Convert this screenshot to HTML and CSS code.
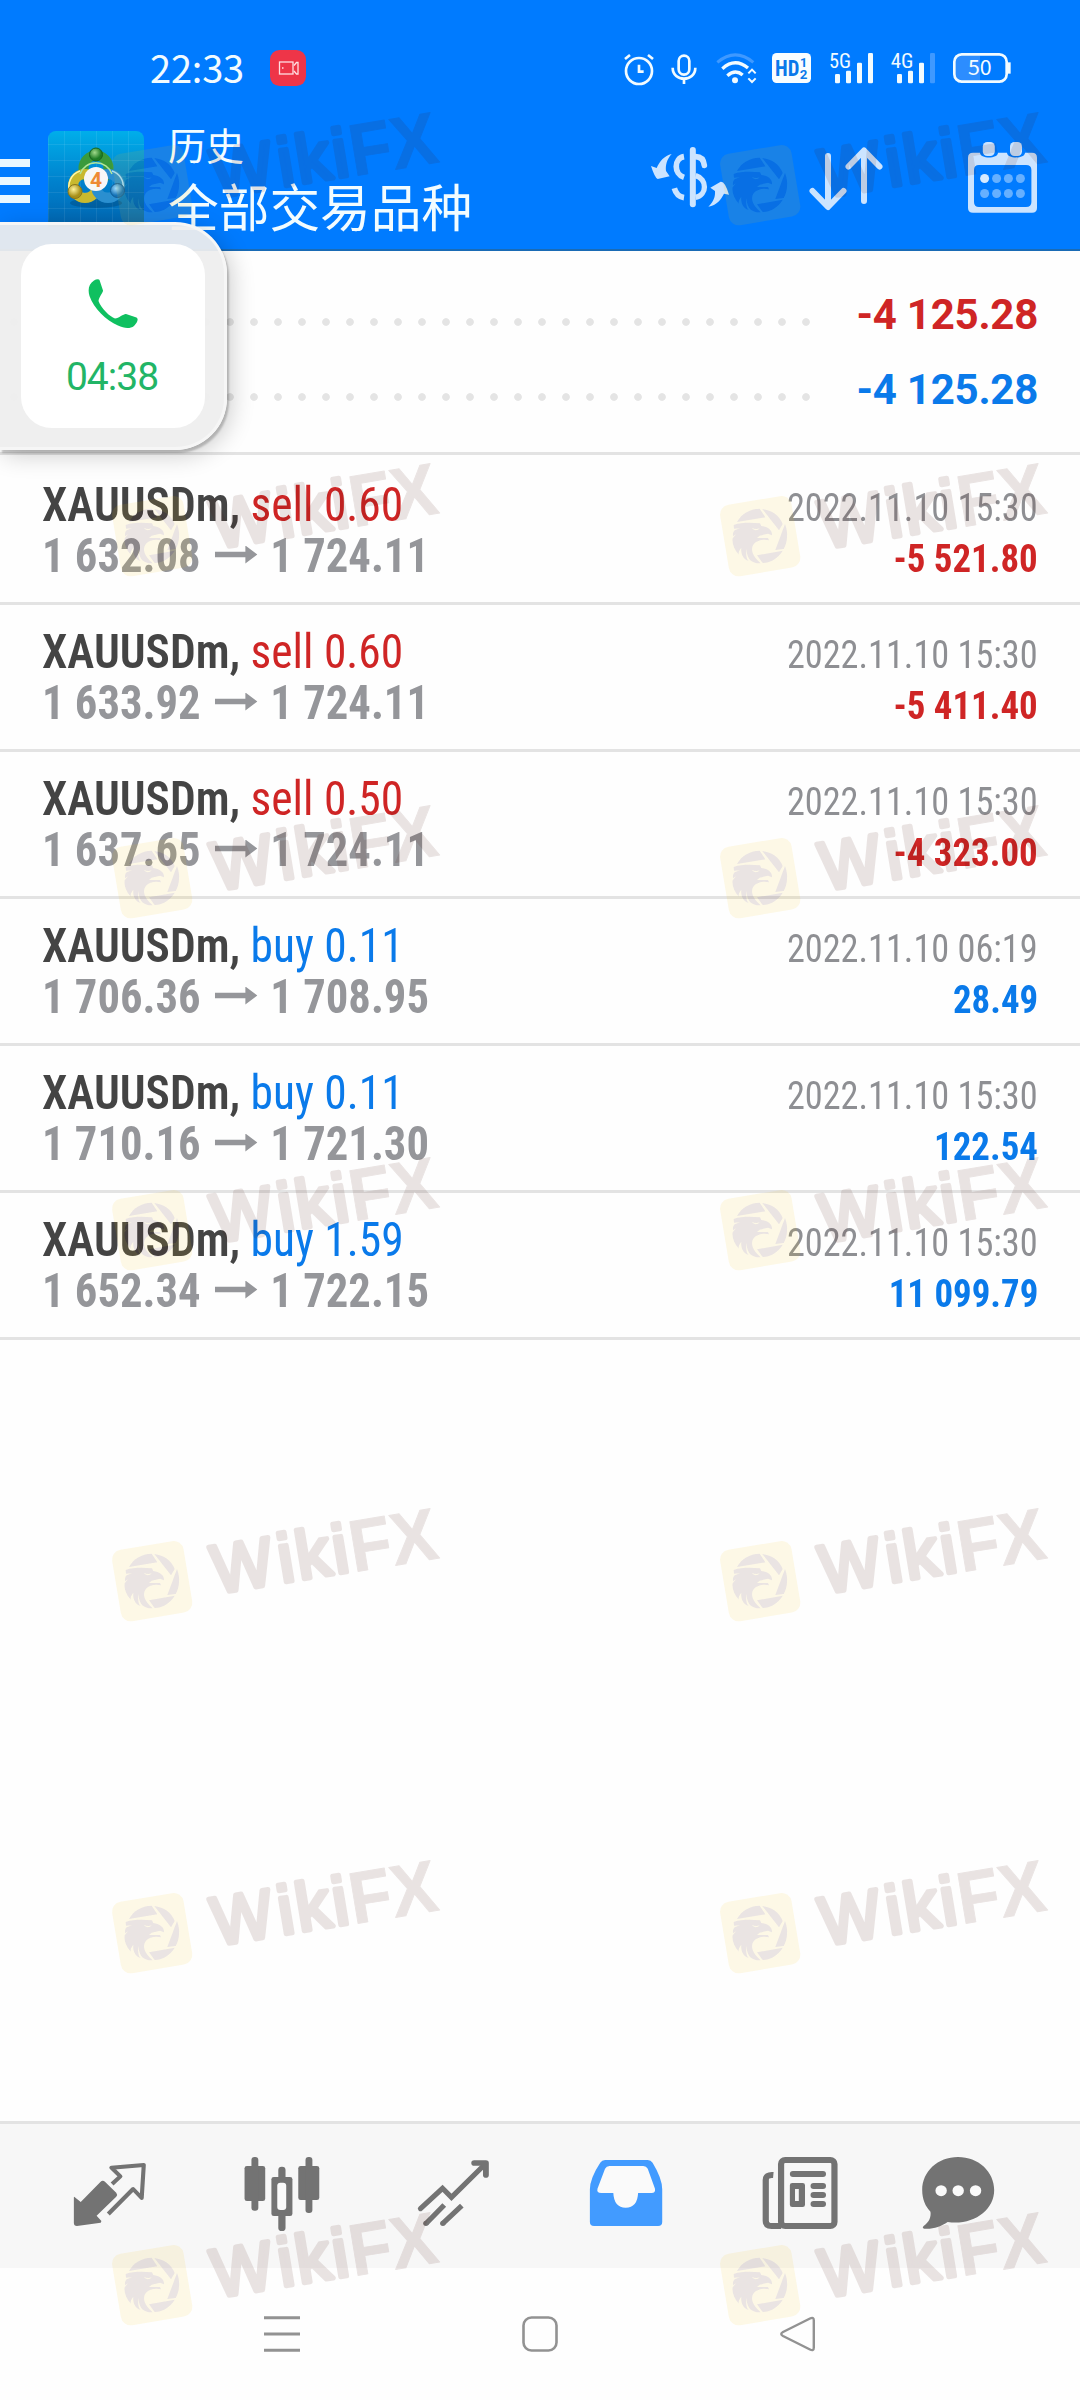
FILE: index.html
```
<!DOCTYPE html>
<html lang="zh">
<head>
<meta charset="utf-8">
<title>历史</title>
<link rel="stylesheet" href="styles.css">
</head>
<body>
<svg width="0" height="0" class="defs">
  <defs>
    <linearGradient id="tile" x1="0" y1="0" x2="0" y2="1"><stop offset="0" stop-color="#00aeea"/><stop offset=".5" stop-color="#0080cc"/><stop offset="1" stop-color="#0062ae"/></linearGradient>
    <pattern id="grid" width="16" height="16" patternUnits="userSpaceOnUse"><path d="M0 .5H16M.5 0V16" stroke="#fff" stroke-opacity=".08"/></pattern>
    <radialGradient id="gr" cx=".4" cy=".35"><stop offset="0" stop-color="#9fd98a"/><stop offset="1" stop-color="#1f7d25"/></radialGradient>
    <radialGradient id="ye" cx=".4" cy=".35"><stop offset="0" stop-color="#fff39a"/><stop offset="1" stop-color="#a8901a"/></radialGradient>
    <radialGradient id="bl" cx=".4" cy=".35"><stop offset="0" stop-color="#9fdcff"/><stop offset="1" stop-color="#1573b8"/></radialGradient>
    <g id="emblem">
      <path d="M87 231C100 206 125 192 155 191L172 217Z"/>
      <path d="M163 192C192 196 214 211 224 237L213 256Z"/>
      <path d="M231 237C241 262 239 290 227 312L202 315Z"/>
      <path d="M224 317C210 340 190 352 164 354L147 331Z"/>
      <path fill-rule="evenodd" d="M77 240C100 232 130 233 156 235L160 243C178 246 193 254 192 271L180 266L155 272L147 279L180 279L183 286C165 281 148 286 138 296C126 312 132 332 158 355C132 356 118 345 115 312C113 330 116 344 122 348C104 342 98 325 100 308C93 316 90 325 93 329C78 314 72 296 74 280L84 268L75 274C74 266 76 260 80 256L96 250L78 251ZM132 249C137 257 149 258 155 250C148 253 140 253 132 249Z"/>
    </g>
    <mask id="cut" maskUnits="userSpaceOnUse" x="0" y="0" width="360" height="450">
      <rect width="360" height="450" fill="#fff"/>
      <use href="#emblem" fill="#000"/>
    </mask>
    <symbol id="mark" viewBox="0 0 1080 450">
      <g mask="url(#cut)"><rect x="48" y="165" width="217" height="217" rx="30" transform="rotate(-9.5 156 273)" fill="#fac314" fill-opacity=".1"/></g>
      <use href="#emblem" fill="#49120a" fill-opacity=".11"/>
      <g transform="translate(350 315) rotate(-9.4)" fill="#49120a" stroke="#49120a" stroke-linejoin="round" opacity=".11">
        <g font-size="204" stroke-width="15"><text x="-1" y="-5" textLength="182" lengthAdjust="spacingAndGlyphs">W</text><text x="199" y="-5" letter-spacing="9">iki</text></g>
        <text x="416" y="0" font-size="220" font-weight="700" stroke-width="3" textLength="264" lengthAdjust="spacingAndGlyphs">FX</text>
      </g>
    </symbol>
  </defs>
</svg>

<div class="screen">
  <header class="header">
    <div class="status">
      <span class="clock">22:33</span>
      <svg class="rec" viewBox="0 0 36 36"><rect width="36" height="36" rx="9.500" fill="#ee3548"/><g fill="none" stroke="#ffdfe2" stroke-width="1.300"><rect x="9.500" y="12" width="13.500" height="12"/><path d="M24 15.500l2.500-3h1.500v11.500h-1.500l-2.500-3M12 18h1.500"/></g></svg>
      <svg class="sys" viewBox="0 0 1230 180" fill="none" stroke="#f2fbff" stroke-width="8">
        <circle cx="87" cy="93" r="39"/><path d="M87 74V95H101M45 57L60 45M129 57L114 45" />
        <rect x="206" y="47" width="32" height="57" rx="16"/><path d="M188 83C188 127 256 127 256 83M222 114V132"/>
        <path d="M322 67Q376 22 430 67" stroke="#3f99ff" stroke-width="9"/><path d="M337 86Q375 52 414 84M352 107Q376 86 398 105" stroke-width="10"/><circle cx="375" cy="121" r="9" fill="#f2fbff" stroke="none"/><path d="M415 100L426 89L437 100M415 115L426 126L437 115" stroke-width="6"/>
        <rect x="486" y="39" width="117" height="90" rx="14" fill="#f8fdff" stroke="none"/>
        <g stroke="none" fill="#0a79ea" font-weight="700"><text class="cond" x="495" y="108" font-size="68" textLength="73" lengthAdjust="spacingAndGlyphs">HD</text><text class="rob" x="570" y="80" font-size="38">1</text><text class="rob" x="569" y="116" font-size="40">2</text></g>
        <g class="cond" stroke="none" fill="#f2fbff" font-size="61"><text x="657" y="84" textLength="66" lengthAdjust="spacingAndGlyphs">5G</text><text x="842" y="84" textLength="68" lengthAdjust="spacingAndGlyphs">4G</text></g>
        <g stroke="none" fill="#f2fbff"><rect x="675" y="102" width="15" height="28" rx="4"/><rect x="708" y="92" width="15" height="38" rx="4"/><rect x="741" y="68" width="15" height="62" rx="4"/><rect x="774" y="39" width="15" height="91" rx="4"/><rect x="861" y="102" width="15" height="28" rx="4"/><rect x="894" y="92" width="15" height="38" rx="4"/><rect x="927" y="68" width="15" height="62" rx="4"/><rect x="960" y="39" width="15" height="91" rx="4" fill="#3f99ff"/></g>
        <rect x="1036" y="46" width="74" height="76" fill="#2c8dff" stroke="none"/><rect x="1033" y="43" width="157" height="82" rx="22"/><path d="M1198 67V101"/>
        <text class="cjk" x="1074" y="106" font-size="62" fill="#f4fbff" stroke="none" textLength="71" lengthAdjust="spacingAndGlyphs">50</text>
      </svg>
    </div>
    <div class="toolbar">
      <div class="burger"><i></i><i></i><i></i></div>
      <svg class="logo" viewBox="48 131 96 96">
        <rect x="48" y="131" width="96" height="104" rx="8" fill="url(#tile)"/><rect x="48" y="131" width="96" height="96" rx="8" fill="url(#grid)"/>
        <ellipse cx="96" cy="203" rx="26" ry="5" fill="#00345f" opacity=".3"/>
        <g fill="none" stroke-width="10"><circle cx="96" cy="168" r="12.500" stroke="#3a9a3c"/><circle cx="85" cy="186" r="12" stroke="#c9b92e"/><circle cx="108" cy="186" r="12" stroke="#2a8fd0"/></g>
        <g fill="none" stroke-width="1.500"><path d="M80 174A17 17 0 0 1 112 174" stroke="#b2e59a"/><path d="M70 192A16 16 0 0 1 80 171" stroke="#fff6a8"/><path d="M112 171A16 16 0 0 1 123 189" stroke="#a5deff"/></g>
        <circle cx="96" cy="154.500" r="6.500" fill="url(#gr)" stroke="#19631d"/><circle cx="75" cy="191.500" r="7" fill="url(#ye)" stroke="#8a761a"/><circle cx="117.500" cy="190.500" r="7" fill="url(#bl)" stroke="#125d96"/>
        <circle cx="96" cy="179" r="12" fill="#f7f7f7"/><text class="rob" x="96" y="186.500" text-anchor="middle" font-size="21" font-weight="700" fill="#ee8a33">4</text>
      </svg>
      <div class="titles"><div class="t1">历史</div><div class="t2">全部交易品种</div></div>
      <svg class="tool" viewBox="0 0 300 300" fill="none" stroke="#cce4ff" stroke-width="17">
        <path d="M158.500 45V208" stroke-width="18" stroke-linecap="round"/><path d="M132 65C101 70 101 117 132 127M103 160C108 178 118 186 132 188"/><path d="M167 65C182 65 191 74 193 91" stroke-linecap="round"/><path d="M167 122C202 132 202 180 167 187" stroke-width="16"/>
        <g fill="#cce4ff" stroke="none"><path d="M95 57C80 73 76 92 78 108L89 124L53 132Q45 130 33 93L50 99C59 79 73 62 95 57Z"/><path d="M205 215C222 199 226 184 225 168L211 158L242 140Q255 138 267 179L252 176C242 195 231 210 205 215Z"/></g>
      </svg>
      <svg class="tool tool-sort" viewBox="800 135 100 100" fill="none" stroke="#cce4ff" stroke-width="6" stroke-linecap="round" stroke-linejoin="round"><path d="M828 156V206M812.500 191L828 207L843.500 191M864 201V151M848.500 166.500L864 150.500L879.500 166.500"/></svg>
      <svg class="tool tool-cal" viewBox="955 135 100 100" fill="#cce4ff">
        <path fill-rule="evenodd" d="M973 152.700H980C980 159 998 159 998 152.700H1007C1007 159 1025 159 1025 152.700H1032Q1037 152.700 1037 157.700V208Q1037 212.700 1032 212.700H973Q968 212.700 968 208V157.700Q968 152.700 973 152.700ZM979 165Q974 165 974 170V202Q974 207 979 207H1026Q1031.400 207 1031.400 202V170Q1031.400 165 1026 165Z"/>
        <rect x="982.800" y="142" width="12" height="14" rx="4.500"/><rect x="1010" y="142" width="12" height="14" rx="4.500"/>
        <circle cx="984.600" cy="178.500" r="4.500" fill="#d6eaff"/>
        <g fill="#66b0ff"><circle cx="996.600" cy="178.500" r="4.500"/><circle cx="1008.400" cy="178.500" r="4.500"/><circle cx="1020.400" cy="178.500" r="4.500"/><circle cx="984.600" cy="193.500" r="4.500"/><circle cx="996.600" cy="193.500" r="4.500"/><circle cx="1008.400" cy="193.500" r="4.500"/><circle cx="1020.400" cy="193.500" r="4.500"/></g>
      </svg>
    </div>
  </header>

  <section class="summary">
    <div class="total"><span class="leader"></span><b class="neg">-4 125.28</b></div>
    <div class="total"><span class="leader"></span><b class="pos">-4 125.28</b></div>
  </section>

  <main class="deals">
    <article class="deal">
      <div class="line"><span class="name"><b class="sym">XAUUSDm,</b> <span class="neg">sell 0.60</span></span><time>2022.11.10 15:30</time></div>
      <div class="line"><span class="price">1 632.08<i class="arrow"></i>1 724.11</span><b class="profit neg">-5 521.80</b></div>
    </article>
    <article class="deal">
      <div class="line"><span class="name"><b class="sym">XAUUSDm,</b> <span class="neg">sell 0.60</span></span><time>2022.11.10 15:30</time></div>
      <div class="line"><span class="price">1 633.92<i class="arrow"></i>1 724.11</span><b class="profit neg">-5 411.40</b></div>
    </article>
    <article class="deal">
      <div class="line"><span class="name"><b class="sym">XAUUSDm,</b> <span class="neg">sell 0.50</span></span><time>2022.11.10 15:30</time></div>
      <div class="line"><span class="price">1 637.65<i class="arrow"></i>1 724.11</span><b class="profit neg">-4 323.00</b></div>
    </article>
    <article class="deal">
      <div class="line"><span class="name"><b class="sym">XAUUSDm,</b> <span class="pos">buy 0.11</span></span><time>2022.11.10 06:19</time></div>
      <div class="line"><span class="price">1 706.36<i class="arrow"></i>1 708.95</span><b class="profit pos">28.49</b></div>
    </article>
    <article class="deal">
      <div class="line"><span class="name"><b class="sym">XAUUSDm,</b> <span class="pos">buy 0.11</span></span><time>2022.11.10 15:30</time></div>
      <div class="line"><span class="price">1 710.16<i class="arrow"></i>1 721.30</span><b class="profit pos">122.54</b></div>
    </article>
    <article class="deal">
      <div class="line"><span class="name"><b class="sym">XAUUSDm,</b> <span class="pos">buy 1.59</span></span><time>2022.11.10 15:30</time></div>
      <div class="line"><span class="price">1 652.34<i class="arrow"></i>1 722.15</span><b class="profit pos">11 099.79</b></div>
    </article>
  </main>

  <nav class="tabs">
    <a class="tab"><svg preserveAspectRatio="none" viewBox="203.800 168 232.300 240"><path fill="#737373" d="M216 290L235 306L292 246Q299 239 306 246L338 278Q343 284 338 290L281 347L295 363L293 368L224 378Q215 378 215 369V292Z"/><path fill="none" stroke="#737373" stroke-width="12" stroke-linejoin="round" d="M326 252L350 229L324 203L418 195L412 294L387 267L315 342"/></svg></a>
    <a class="tab"><svg preserveAspectRatio="none" viewBox="704.500 168 232.300 240"><g fill="#737373"><rect x="709" y="198" width="60" height="105" rx="7"/><rect x="729" y="171" width="20" height="161" rx="9"/><rect x="865" y="198" width="61" height="102" rx="7"/><rect x="886" y="171" width="20" height="168" rx="9"/><rect x="807" y="200" width="21" height="193" rx="10"/><rect x="787" y="231" width="61" height="117" rx="7"/></g><rect x="804" y="248" width="26" height="82" rx="9" fill="#fafafa"/></svg></a>
    <a class="tab"><svg preserveAspectRatio="none" viewBox="1205.100 168 232.300 240"><g fill="none" stroke="#737373" stroke-width="15"><path stroke-linecap="round" d="M1221 326L1285 265L1311 292L1409 192"/><path stroke-width="17" stroke-linecap="round" stroke-linejoin="round" d="M1377 189H1411V225"/><path d="M1290 315L1238 370M1341 317L1286 370"/></g><g fill="#737373"><circle cx="1237" cy="370" r="8"/><circle cx="1286" cy="370" r="8"/></g></svg></a>
    <a class="tab"><svg preserveAspectRatio="none" viewBox="137.600 168 232.300 240"><path fill="#429bff" d="M190 180H314Q323 180 328 188Q356 235 356 268V366Q356 378 344 378H158Q146 378 146 366V268Q146 235 176 188Q181 180 190 180Z"/><path fill="#fafafa" d="M203 198H301Q310 198 314 206L335 266Q337 279 325 279H286Q284 323 250 323Q216 323 214 279H179Q165 279 168 266L190 206Q194 198 203 198Z"/></svg></a>
    <a class="tab"><svg preserveAspectRatio="none" viewBox="638.300 168 232.300 240"><g fill="none" stroke="#737373" stroke-width="18"><rect x="699.500" y="180" width="155" height="198" rx="12"/><path d="M677 225Q655 223 655 240V362Q655 378 672 378H700"/></g><g fill="#737373"><rect x="725" y="213" width="105" height="18" rx="9"/><path fill-rule="evenodd" d="M732 249H762Q769 249 769 256V314Q769 321 762 321H732Q725 321 725 314V256Q725 249 732 249ZM740 267V303H751V267Z"/><rect x="785" y="249" width="45" height="18" rx="9"/><rect x="785" y="276" width="45" height="18" rx="9"/><rect x="785" y="303" width="45" height="18" rx="9"/></g></svg></a>
    <a class="tab tab-last"><svg preserveAspectRatio="none" viewBox="1096.800 168 232.300 240"><path fill="#737373" d="M1213 171C1272 171 1318 215 1318 270C1318 332 1256 377 1183 366C1163 380 1140 388 1115 386Q1107 384 1114 377C1130 365 1135 350 1133 335C1118 319 1109 298 1109 270C1109 215 1154 171 1213 171Z"/><g fill="#fafafa"><circle cx="1164" cy="272" r="16.500"/><circle cx="1213.500" cy="272" r="16.500"/><circle cx="1264" cy="272" r="16.500"/></g></svg></a>
  </nav>
  <div class="sysnav">
    <svg viewBox="0 0 36 36" fill="none" stroke="#929292" stroke-width="3"><path d="M0 1.700H36M0 18H36M0 34.300H36"/></svg>
    <svg viewBox="0 0 36 36" fill="none" stroke="#929292" stroke-width="2.600"><rect x="1.500" y="1.500" width="33" height="33" rx="8"/></svg>
    <svg viewBox="0 0 36 36" fill="none" stroke="#929292" stroke-width="2.400" stroke-linejoin="round"><path d="M30 2.500Q33.800 .5 33.800 4.500V31.500Q33.800 35.500 30 33.500L3 20Q-.5 18 3 16Z"/></svg>
  </div>

  <aside class="call">
    <div class="call-card">
      <svg viewBox="0 0 50 50"><path fill="#0fc060" d="M6 1.500C8 .2 11 0 11.500 1L15 11.500C15.300 13 11 18 10.500 22C13 29 22 38 27 39.500C31 39 36 34.500 38 35L48.500 38.500C51 40 49 44 46 47C42 50 36 49.500 30 46.500C18 41 6 30 1.500 17C-.5 10 1 5 6 1.500Z"/></svg>
      <span>04:38</span>
    </div>
  </aside>

  <div class="marks">
    <div class="mark-row"><svg><use href="#mark"/></svg><svg><use href="#mark"/></svg></div>
    <div class="mark-row"><svg><use href="#mark"/></svg><svg><use href="#mark"/></svg></div>
    <div class="mark-row mark-near"><svg><use href="#mark"/></svg><svg><use href="#mark"/></svg></div>
    <div class="mark-row"><svg><use href="#mark"/></svg><svg><use href="#mark"/></svg></div>
    <div class="mark-row"><svg><use href="#mark"/></svg><svg><use href="#mark"/></svg></div>
    <div class="mark-row"><svg><use href="#mark"/></svg><svg><use href="#mark"/></svg></div>
    <div class="mark-row"><svg><use href="#mark"/></svg><svg><use href="#mark"/></svg></div>
  </div>
</div>
</body>
</html>
```
FILE: styles.css
```
* { box-sizing: border-box; }
body { margin: 0; background: #fefefe; font-family: Roboto, "Noto Sans CJK SC", sans-serif; }
svg { display: block; }
.defs { position: absolute; }
.rob { font-family: Roboto, sans-serif; }
.cond { font-family: "Roboto Condensed", Roboto, sans-serif; }
.cjk { font-family: "Noto Sans CJK SC", sans-serif; }
.neg { color: #cf2525; }
.pos { color: #0a7aea; }

.screen { position: relative; width: 1080px; height: 2400px; display: flex; flex-direction: column; overflow: hidden; }

.header { height: 251px; background: #007bff; border-bottom: 2px solid #1a6bb5; }
.status { height: 100px; display: flex; align-items: flex-start; padding-left: 150px; }
.clock { width: 120px; padding-top: 39px; font: 38px/56px "Noto Sans CJK SC", sans-serif; letter-spacing: -.2px; color: #f2fbff; }
.rec { width: 36px; height: 36px; margin-top: 50px; }
.sys { width: 410px; height: 60px; margin: 40px 0 0 304px; }
.toolbar { height: 149px; display: flex; align-items: flex-start; }
.burger { width: 30px; margin-top: 59px; display: grid; gap: 10px; }
.burger i { height: 8px; background: #eaf7ff; }
.logo { width: 96px; height: 96px; margin: 31px 24px 0 18px; }
.titles { width: 472px; padding-top: 19px; font-family: "Noto Sans CJK SC", sans-serif; color: #f2fcff; white-space: nowrap; }
.t1 { font-size: 38px; line-height: 50px; }
.t2 { font-size: 50.700px; line-height: 72px; }
.tool { width: 100px; height: 100px; margin-top: 35px; }
.tool-sort { margin-left: 60px; }
.tool-cal { margin-left: 55px; }

.summary { height: 204px; padding: 26px 42px 0 0; border-bottom: 3px solid #e3e3e3; }
.total { height: 75px; display: flex; font-size: 42px; line-height: 75px; }
.leader { flex: 1; background: radial-gradient(circle at 12px 45px, #e4e4e4 3.400px, transparent 4.200px) right top / 24px 75px; }
.total b { width: 220px; text-align: right; letter-spacing: -.25px; }

.deals { flex: 1; padding-top: 3px; font-family: "Roboto Condensed", Roboto, sans-serif; }
.deal { height: 147px; padding: 20.500px 42px 0 42px; border-bottom: 3px solid #e3e3e3; }
.line { height: 51px; display: flex; justify-content: space-between; align-items: baseline; line-height: 51px; font-size: 48px; white-space: nowrap; }
/* the deal list is set slightly narrower than the condensed face */
.name, .price { transform-origin: left; }
.name { transform: scaleX(.947); }
.sym { color: #444; font-weight: 650; }
.price { color: #95969a; font-weight: 700; transform: scaleX(.93); }
.arrow { display: inline-block; width: 46px; height: 18px; margin: 0 14px 0 15px; vertical-align: 8px; background: #95969a; clip-path: polygon(0 35%, 72% 35%, 72% 0, 100% 50%, 72% 100%, 72% 65%, 0 65%); }
.line time { font-size: 39px; color: #8e8f93; transform: scaleX(.93); transform-origin: right; }
.profit { font-size: 39px; font-weight: 700; transform: scaleX(.945); transform-origin: right; }

.tabs { height: 147px; display: flex; align-items: center; padding-left: 24px; background: #f7f7f7; border-top: 3px solid #e3e3e3; }
.tab { width: 172.400px; display: flex; justify-content: center; }
.tab-last { width: 143.400px; }
.tab svg { width: 80px; height: 80px; }
.sysnav { height: 132px; display: grid; grid-template-columns: repeat(3, 258px); justify-content: center; align-items: center; justify-items: center; }
.sysnav svg { width: 36px; height: 36px; overflow: visible; }

/* floating call bubble, docked to the left edge */
.call { position: absolute; left: 0; top: 222px; width: 227px; height: 228px; padding: 19px 0 0 21px; background: rgba(238, 238, 238, .94); border: 3px solid #f6f6f6; border-left: 0; border-radius: 0 52px 52px 0; box-shadow: 2px 3px 2px rgba(0, 0, 0, .2), 4px 5px 24px rgba(0, 0, 0, .2); }
.call-card { width: 184px; height: 184px; border-radius: 31px; background: #fff; display: flex; flex-direction: column; align-items: center; padding-top: 35px; }
.call-card svg { width: 50px; height: 50px; }
.call-card span { margin: 23px 2px 0 0; font-size: 39px; line-height: 50px; letter-spacing: -1px; color: #22b566; }

.marks { position: absolute; inset: 0; pointer-events: none; font-family: "Liberation Sans", sans-serif; padding: 93.500px 0 0 100px; }
.mark-row { height: 351.700px; display: flex; gap: 248px; }
.mark-row svg { width: 360px; height: 150px; flex: none; }
.mark-near { margin-top: -10px; }
```
